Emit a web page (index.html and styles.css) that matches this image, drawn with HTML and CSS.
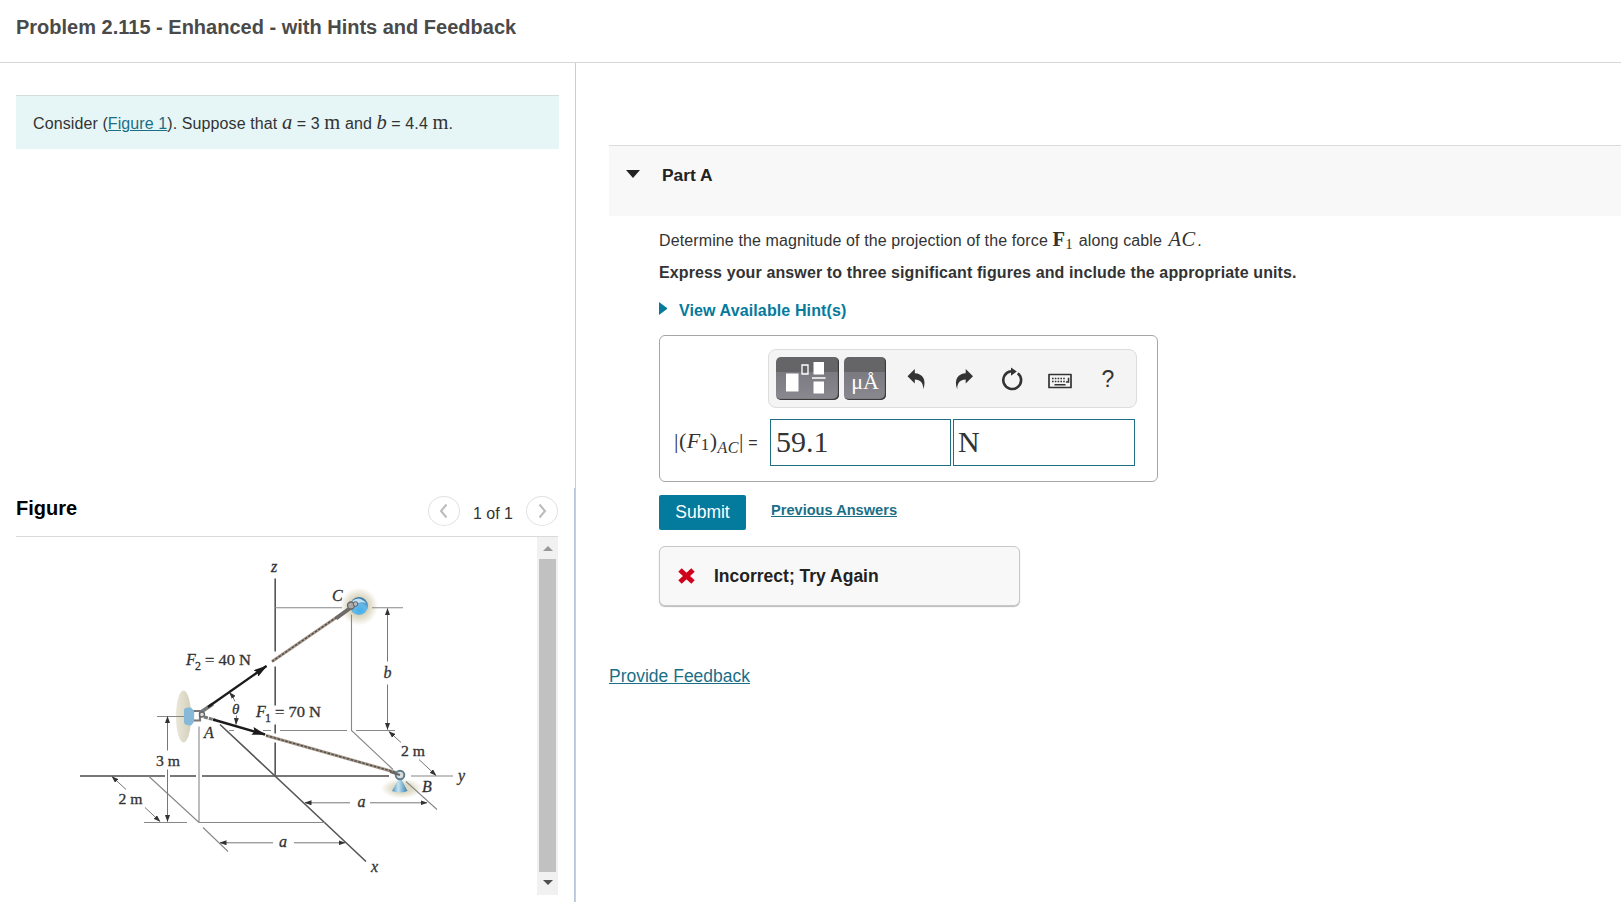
FILE: index.html
```html
<!DOCTYPE html>
<html lang="en">

<head>
  <meta charset="UTF-8">
  <meta name="viewport" content="width=device-width, initial-scale=1" />
  <title>Problem 2.115</title>
  <link rel="stylesheet" href="styles.css">
</head>

<body>
  <header>
    <h1>Problem 2.115 - Enhanced - with Hints and Feedback</h1>
  </header>

  <main>
    <div class="left">
      <div class="intro">
        Consider (<a href="#figure">Figure 1</a>). Suppose that <i class="math">a</i> = 3 <span class="math">m</span> and <i class="math">b</i> = 4.4 <span class="math">m</span>.
      </div>

      <section id="figure" class="figure">
        <div class="figure-head">
          <h2>Figure</h2>
          <div class="pager">
            <button class="round"><svg viewBox="0 0 30 28"><path d="M17.500 7.500L12 14l5.500 6.500" /></svg></button>
            <span>1 of 1</span>
            <button class="round"><svg viewBox="0 0 30 28"><path d="M12.500 7.500L18 14l-5.500 6.500" /></svg></button>
          </div>
        </div>

        <div class="figure-body">
          <svg class="diagram" viewBox="16 536.500 521 358">
            <defs>
              <radialGradient id="glow">
                <stop offset="0.45" stop-color="#d6d1b8" />
                <stop offset="1" stop-color="#d6d1b8" stop-opacity="0" />
              </radialGradient>
              <linearGradient id="wall">
                <stop offset="0" stop-color="#e6e3d3" />
                <stop offset="1" stop-color="#cbc7ae" />
              </linearGradient>
              <radialGradient id="ball" cx="0.55" cy="0.75" r="0.7">
                <stop offset="0" stop-color="#3fb0ee" />
                <stop offset="0.5" stop-color="#69b7e4" />
                <stop offset="1" stop-color="#2f78aa" />
              </radialGradient>
              <linearGradient id="cone">
                <stop offset="0" stop-color="#4d8fb8" />
                <stop offset="0.4" stop-color="#c4e4f4" />
                <stop offset="1" stop-color="#3a7fab" />
              </linearGradient>
              <marker id="tip" viewBox="0 0 7 5" refX="6.500" refY="2.500" markerWidth="7" markerHeight="5" markerUnits="userSpaceOnUse" orient="auto">
                <path d="M0 0L7 2.500L0 5z" fill="#333" />
              </marker>
              <marker id="force" viewBox="0 0 14 8" refX="13" refY="4" markerWidth="14" markerHeight="8" markerUnits="userSpaceOnUse" orient="auto">
                <path d="M0 0L14 4L0 8L2 4z" fill="#1c1a1b" />
              </marker>
            </defs>

            <!-- wall and ground shading -->
            <ellipse cx="183.500" cy="716" rx="7.500" ry="26" fill="url(#wall)" opacity="0.850" />
            <circle cx="359" cy="606" r="19" fill="url(#glow)" />
            <ellipse cx="402" cy="788" rx="21" ry="10" fill="url(#glow)" opacity="0.800" />

            <!-- axes -->
            <g class="axis">
              <path d="M275.200 578V651M275.200 666V705M275.200 724V733M275.200 742V776" />
              <path class="wide" d="M80 775.500H165M170 775.500H196M202 775.500H389" />
              <path d="M411 775.500H453" class="thin" />
              <path d="M220 724L275 775.500L366 861" />
            </g>

            <!-- construction lines -->
            <g class="thin">
              <path d="M275 607.200H342M372 607.200H403" />
              <path d="M351.500 614V730L393 769" />
              <path d="M229 730H234M263 730H271M280 730H347M356 730H395" />
              <path d="M199 726V822M149 776L199 822M199 822H325M144 822H187" />
              <path d="M157 716H184M203 827L228 851M406 781L437 809" />
            </g>

            <!-- dimensions -->
            <g class="dim">
              <path marker-end="url(#tip)" d="M387.500 661V608" />
              <path marker-end="url(#tip)" d="M387.500 684V729" />
              <path marker-end="url(#tip)" d="M401 742L389 731" />
              <path marker-end="url(#tip)" d="M419 759L436 775" />
              <path marker-end="url(#tip)" d="M350 802.300H305" />
              <path marker-end="url(#tip)" d="M370 802.300H427" />
              <path marker-end="url(#tip)" d="M126 789L112 776" />
              <path marker-end="url(#tip)" d="M145 807L160 821" />
              <path marker-end="url(#tip)" d="M167.500 750V716" />
              <path marker-end="url(#tip)" d="M167.500 769V821" />
              <path marker-end="url(#tip)" d="M273 842.300H220" />
              <path marker-end="url(#tip)" d="M294 842.300H345" />
              <path marker-end="url(#tip)" d="M235 701Q233 696 229.500 692" />
              <path marker-end="url(#tip)" d="M236.500 715L236 724" />
            </g>

            <!-- cables -->
            <path class="cable" d="M272 661L348 609" />
            <path class="cable twist" d="M272 661L348 609" />
            <path class="cable" d="M266 735L396 772" />
            <path class="cable twist" d="M266 735L396 772" />
            <path d="M336 618L351 607" stroke="#6d6a68" stroke-width="4" />

            <!-- support A -->
            <path d="M193 710.500h7v9.500h-7z" fill="#fff" stroke="#777" stroke-width="2.200" />
            <path d="M191 707Q184 706.500 184 709.500V721.500Q184 725 191 725L194 721.500V710.500z" fill="#86b9d8" />
            <path d="M201 711.500L213 703.500" stroke="#777" stroke-width="3.500" />
            <circle cx="202" cy="714" r="2.500" fill="#ddd" stroke="#666" stroke-width="1.400" />
            <path d="M204 716.500L215 719.500" stroke="#777" stroke-width="3" stroke-dasharray="4 1" />

            <path class="force" d="M208 706.500L266.500 665.500" />
            <path class="force" d="M213 719L265 734" />

            <!-- support C -->
            <circle cx="359" cy="605.500" r="9" fill="url(#ball)" />
            <path d="M352 600.500Q359 594.500 366 602.500Q359 600.500 354 604.500z" fill="#e3f3fb" opacity="0.800" />
            <circle cx="351" cy="605" r="3.500" fill="#aaa" stroke="#666" stroke-width="1.300" />
            <circle cx="355.500" cy="603.500" r="2.300" fill="#bbb" stroke="#56646d" />

            <!-- support B -->
            <path d="M398.500 779h3l6 11.500q-7.500 3-15.500 0z" fill="url(#cone)" />
            <circle cx="400" cy="774.500" r="4.300" fill="#ddd" stroke="#5b7f8d" stroke-width="2" />
            <path d="M390 771.500L400 774.500" stroke="#666" stroke-width="2.200" />

            <g class="labels">
              <text class="it" x="271" y="571">z</text>
              <text class="it" x="332" y="600.500">C</text>
              <text class="it" x="383.500" y="677">b</text>
              <text class="it" x="186" y="664.500">F</text>
              <text class="sub" x="195" y="669">2</text>
              <text x="205" y="664.500" textLength="46" lengthAdjust="spacingAndGlyphs">= 40 N</text>
              <text class="it theta" x="232" y="713">θ</text>
              <text class="it" x="256" y="716.500">F</text>
              <text class="sub" x="265" y="721">1</text>
              <text x="275" y="716.500" textLength="46" lengthAdjust="spacingAndGlyphs">= 70 N</text>
              <text class="it" x="204" y="737">A</text>
              <text x="156" y="765.500" textLength="24" lengthAdjust="spacingAndGlyphs">3 m</text>
              <text x="118.500" y="803.500" textLength="24" lengthAdjust="spacingAndGlyphs">2 m</text>
              <text x="401" y="755.500" textLength="24" lengthAdjust="spacingAndGlyphs">2 m</text>
              <text class="it" x="458" y="780.500">y</text>
              <text class="it" x="422" y="791">B</text>
              <text class="it" x="357.500" y="806.500">a</text>
              <text class="it" x="279" y="846.500">a</text>
              <text class="it" x="371" y="871">x</text>
            </g>
          </svg>

          <div class="scrollbar">
            <i class="arrow up"></i>
            <div class="thumb"></div>
            <i class="arrow down"></i>
          </div>
        </div>
      </section>
    </div>

    <div class="right">
      <div class="part-head">
        <i class="caret"></i>
        <h3>Part A</h3>
      </div>

      <div class="part-body">
        <p class="question">Determine the magnitude of the projection of the force <span class="math"><b>F</b><sub>1</sub></span> along cable <i class="math">AC</i>.</p>
        <p class="instructions">Express your answer to three significant figures and include the appropriate units.</p>
        <a class="hints"><i></i>View Available Hint(s)</a>

        <div class="answer">
          <div class="toolbar">
            <button class="tool wide">
              <svg width="63" height="43" viewBox="0 0 63 43">
                <path d="M10 16.500h12.500v18H10zM37.500 5h10.500v12.500H37.500zM37.500 24.500h10.500v12H37.500zM36 20.300h13.500v1.500H36z" fill="#fff" />
                <path d="M26 8h6v9h-6z" fill="none" stroke="#fff" stroke-width="1.300" />
              </svg>
            </button>
            <button class="tool">μÅ</button>
            <div class="icons">
              <svg viewBox="0 0 24 24"><path d="M3.500 9.200L10.800 2v4.200C18 6.500 23 12 19.300 22.300C19.300 16 16.500 12.800 10.800 12.600v4z" /></svg>
              <svg viewBox="0 0 24 24"><path d="M21 9.200L13.700 2v4.200C6.500 6.500 1.500 12 5.200 22.300C5.200 16 8 12.800 13.700 12.600v4z" /></svg>
              <svg viewBox="0 0 24 24"><path d="M17.800 6.200A8.900 8.900 0 1 1 11 4.300" fill="none" stroke="#333" stroke-width="2.600" /><path d="M11 .500L16.800 4.400L11 8.700z" /></svg>
              <svg viewBox="0 0 24 24"><path d="M1 7.500h22v13H1z" fill="none" stroke="#333" stroke-width="1.700" stroke-linejoin="round" /><path d="M4 11.500h13M4 14.500h13" stroke="#333" stroke-width="1.600" stroke-dasharray="1.600 1.200" /><path d="M6.500 17.700h11M18 15h2.500v-4.300" fill="none" stroke="#333" stroke-width="1.500" /></svg>
              <span>?</span>
            </div>
          </div>

          <div class="fields">
            <label><span class="math">|(<i>F</i><sub>1</sub>)<sub class="ac">AC</sub>|</span> =</label>
            <div class="field">59.1</div>
            <div class="field unit">N</div>
          </div>
        </div>

        <div class="actions">
          <button class="submit">Submit</button>
          <a href="#">Previous Answers</a>
        </div>

        <div class="feedback">
          <svg width="18" height="18" viewBox="0 0 18 18"><path d="M2 3L15 15M15 3L2 15" stroke="#d0021b" stroke-width="5" /></svg>
          Incorrect; Try Again
        </div>
      </div>

      <a class="provide" href="#">Provide Feedback</a>
    </div>
  </main>
</body>

</html>
```
FILE: styles.css
```css
:root {
  --color-text: #333;
  --color-link: #1a6f87;
  --color-accent: #047a9c;
  --color-line: #d4d8d8;
  --font-math: "Liberation Serif", serif;
}

* {
  box-sizing: border-box;
  margin: 0;
  padding: 0;
}

body {
  height: 902px;
  overflow: hidden;
  background: #fff;
  color: var(--color-text);
  font: 16px/20px "Liberation Sans", sans-serif;

  display: flex;
  flex-direction: column;
}

a {
  color: var(--color-link);
}

button {
  border: none;
  font-family: inherit;
}

.math {
  font-family: var(--font-math);
  font-size: 20.5px;
  line-height: 0;
}

header {
  height: 63px;
  flex-shrink: 0;
  padding: 17px 16px 0;
  border-bottom: 1px solid var(--color-line);

  h1 {
    font-size: 20px;
    color: #4a4a4a;
  }
}

main {
  flex: 1;
  display: flex;
}

.left {
  width: 576px;
  flex-shrink: 0;
  border-right: 1px solid #c4d0d8;

  display: flex;
  flex-direction: column;
  justify-content: space-between;
}

.intro {
  height: 54px;
  margin: 32px 16px 0;
  padding: 18px 17px;
  border-top: 1px solid #d5dcdc;
  background: #e6f6f6;
  letter-spacing: 0.1px;
  white-space: nowrap;
}

.figure {
  height: 414px;
  padding: 0 16px;
  border-right: 1px solid #b7c7d8;
}

.figure-head {
  height: 49px;
  border-bottom: 1px solid #dadada;

  display: flex;
  justify-content: space-between;

  h2 {
    padding-top: 10px;
    font-size: 20px;
    color: #000;
  }
}

.pager {
  display: flex;
  align-items: flex-start;
  gap: 13px;
  padding-top: 8px;

  span {
    padding-top: 8px;
  }
}

.round {
  width: 32px;
  height: 30px;
  border: 1px solid #e2e2e2;
  border-radius: 50%;
  background: #fff;

  svg {
    display: block;
    width: 30px;
    height: 28px;
    fill: none;
    stroke: #bbb;
    stroke-width: 2;
  }
}

.figure-body {
  display: flex;
}

.diagram {
  width: 521px;
  height: 358px;

  .axis, .thin, .dim, .cable, .force {
    fill: none;
  }

  .axis {
    stroke: #555;
    stroke-width: 1.6;
  }

  .wide {
    stroke: #777;
    stroke-width: 2;
  }

  .thin {
    stroke: #888;
    stroke-width: 1.1;
  }

  .dim {
    stroke: #777;
    stroke-width: 1;
  }

  .cable {
    stroke: #a3978a;
    stroke-width: 3;
  }

  .twist {
    stroke: #554b45;
    stroke-width: 1.4;
    stroke-dasharray: 2.5 1.5;
  }

  .force {
    stroke: #1c1a1b;
    stroke-width: 2.4;
    marker-end: url(#force);
  }
}

.labels {
  font: 15px var(--font-math);
  fill: #333;
  stroke: #333;
  stroke-width: 0.3;

  .it {
    font-style: italic;
    font-size: 16px;
  }

  .theta {
    font-size: 15px;
  }

  .sub {
    font-size: 12px;
  }
}

.scrollbar {
  width: 21px;
  height: 358px;
  background: #f1f1f1;

  display: flex;
  flex-direction: column;
  align-items: center;
  justify-content: space-between;

  .thumb {
    width: 17px;
    height: 313px;
    background: #c1c1c1;
  }

  .arrow {
    border: 5px solid transparent;
  }

  .up {
    margin-top: 9px;
    border-top: none;
    border-bottom-color: #999;
  }

  .down {
    margin-bottom: 10px;
    border-top-color: #505050;
    border-bottom: none;
  }
}

.right {
  flex: 1;
  padding: 82px 0 0 33px;
}

.part-head {
  height: 71px;
  padding: 14px 17px;
  border-top: 1px solid #d8dcdc;
  background: #f8f8f8;

  display: flex;
  gap: 22px;

  .caret {
    height: 8px;
    margin-top: 10px;
    border: 7px solid transparent;
    border-top: 8px solid #222;
    border-bottom: none;
  }

  h3 {
    padding-top: 5px;
    font-size: 17.4px;
    color: #222;
  }
}

.part-body {
  padding: 14px 0 0 50px;
}

.question {
  height: 33px;
  padding-top: 1px;
  letter-spacing: 0.12px;

  .math {
    margin-right: 1.5px;
  }

  i.math {
    margin-left: 2px;
    letter-spacing: 0.5px;
  }

  sub {
    font-size: 15px;
    vertical-align: -3px;
  }
}

.instructions {
  height: 38px;
  font-weight: bold;
  letter-spacing: 0.12px;
}

.hints {
  height: 34px;
  color: var(--color-accent);
  font-weight: bold;
  letter-spacing: 0.12px;

  display: flex;
  gap: 12px;

  i {
    height: 13px;
    margin-top: 1px;
    border: 6.5px solid transparent;
    border-left: 8px solid var(--color-accent);
    border-right: none;
  }
}

.answer {
  width: 499px;
  height: 147px;
  padding: 13px 20px 0 14px;
  border: 1px solid #a6a6a6;
  border-radius: 6px;
}

.toolbar {
  width: 369px;
  height: 59px;
  margin-left: auto;
  padding: 0 7px;
  border: 1px solid #dcdcdc;
  border-radius: 8px;
  background: #f4f4f4;

  display: flex;
  align-items: center;
  gap: 5px;
}

.tool {
  width: 42px;
  height: 43px;
  border-radius: 5px;
  background: linear-gradient(#656567 0 34%, #7b7a80 35%, #8a898f 100%);
  box-shadow: inset -1px -1px 1px #333;
  color: #fff;
  font: 22px/50px var(--font-math);

  &.wide {
    width: 63px;
  }
}

.icons {
  display: flex;
  align-items: center;
  gap: 24px;
  margin-left: 13px;

  svg {
    width: 24px;
    height: 24px;
    fill: #333;
  }

  span {
    width: 24px;
    text-align: center;
    font-size: 23px;
  }
}

.fields {
  margin-top: 11px;

  display: flex;
  gap: 2px;

  label {
    width: 94px;
    padding-top: 14px;
    white-space: nowrap;
  }

  .math {
    font-size: 22px;
    letter-spacing: 0.5px;
  }

  sub {
    font-size: 17px;
    vertical-align: -2px;
  }

  .ac {
    font-size: 16px;
    font-style: italic;
    vertical-align: -5px;
  }
}

.field {
  width: 181px;
  height: 47px;
  padding-left: 5px;
  border: 1px solid #1f6f80;
  font: 30px/44px var(--font-math);
}

.unit {
  width: 182px;
  padding-left: 4px;
}

.actions {
  margin-top: 13px;

  display: flex;
  gap: 25px;

  a {
    padding-top: 5px;
    font-size: 14.6px;
    font-weight: bold;
  }
}

.submit {
  width: 87px;
  height: 35px;
  border-radius: 2px;
  background: var(--color-accent);
  color: #fff;
  font-size: 17.5px;
}

.feedback {
  width: 361px;
  height: 60px;
  margin-top: 16px;
  padding-left: 18px;
  border: 1px solid #c8c8c8;
  border-radius: 6px;
  box-shadow: 0 1px 1px #bbb;
  background: #f8f8f8;
  color: #222;
  font-size: 17.5px;
  font-weight: bold;

  display: flex;
  align-items: center;
  gap: 18px;
}

.provide {
  display: inline-block;
  margin-top: 60px;
  font-size: 17.5px;
}
```
